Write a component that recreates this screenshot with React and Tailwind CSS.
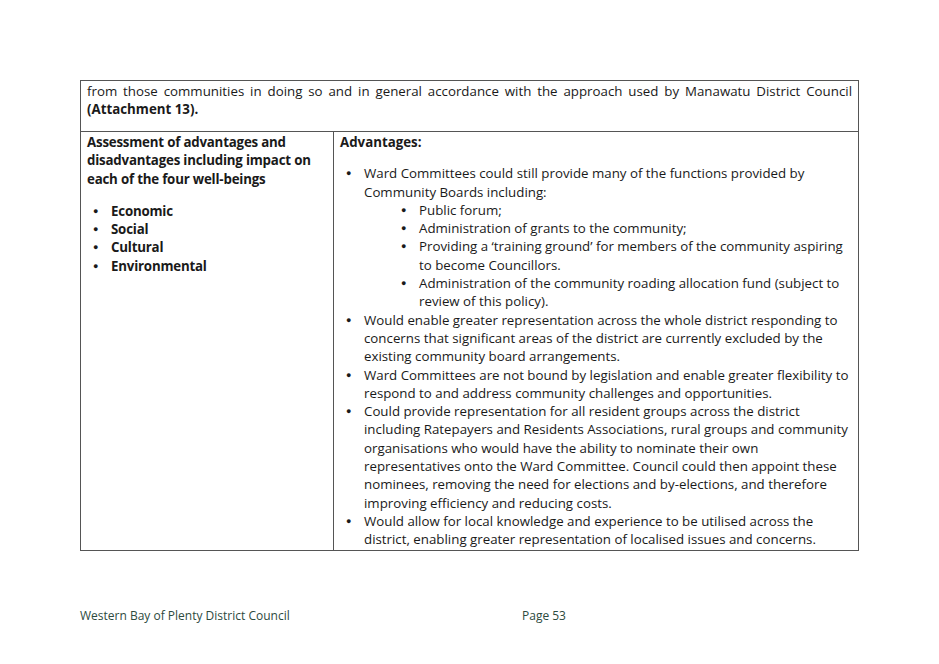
export default function App() {
  const f = { fontFamily: '"Open Sans", "Liberation Sans", sans-serif' };
  const B = ({ children, indent }) => (
    <div className={`flex ${indent ? "pl-[55px]" : ""}`}>
      <span className="w-[24px] shrink-0 pl-[6px] text-[9px]">●</span>
      <span>{children}</span>
    </div>
  );
  return (
    <div className="w-[939px] h-[664px] bg-white relative text-[#1a1a1a] text-[13.3px] leading-[18.3px]" style={f}>
      <div className="pt-[80px] pl-[80px]">
        <div className="w-[779px] border border-[#555]">
          <div className="px-[6px] pt-[1px] h-[51px] text-justify border-b border-[#555]">
            <span className="[text-align-last:justify] block">from those communities in doing so and in general accordance with the approach used by Manawatu District Council</span>
            <b>(Attachment 13).</b>
          </div>
          <div className="flex h-[418px]">
            <div className="w-[253px] border-r border-[#555] px-[6px] pt-[1px] font-bold tracking-[-0.2px]">
              <div>Assessment of advantages and disadvantages including impact on each of the four well-beings</div>
              <div className="mt-[14px]">
                {["Economic", "Social", "Cultural", "Environmental"].map(t => <B key={t}>{t}</B>)}
              </div>
            </div>
            <div className="flex-1 px-[6px] pt-[1px] pr-[8px]">
              <div className="font-bold">Advantages:</div>
              <div className="mt-[13px]">
                <B>Ward Committees could still provide many of the functions provided by Community Boards including:</B>
                <B indent>Public forum;</B>
                <B indent>Administration of grants to the community;</B>
                <B indent>Providing a ‘training ground’ for members of the community aspiring to become Councillors.</B>
                <B indent>Administration of the community roading allocation fund (subject to review of this policy).</B>
                <B>Would enable greater representation across the whole district responding to concerns that significant areas of the district are currently excluded by the existing community board arrangements.</B>
                <B>Ward Committees are not bound by legislation and enable greater flexibility to respond to and address community challenges and opportunities.</B>
                <B>Could provide representation for all resident groups across the district including Ratepayers and Residents Associations, rural groups and community organisations who would have the ability to nominate their own representatives onto the Ward Committee.  Council could then appoint these nominees, removing the need for elections and by-elections, and therefore improving efficiency and reducing costs.</B>
                <B>Would allow for local knowledge and experience to be utilised across the district, enabling greater representation of localised issues and concerns.</B>
              </div>
            </div>
          </div>
        </div>
      </div>
      <div className="absolute top-[607px] left-[80px] w-[500px] flex text-[#2d4a3e] text-[12px]">
        <span className="w-[442px]">Western Bay of Plenty District Council</span>
        <span>Page 53</span>
      </div>
    </div>
  );
}
